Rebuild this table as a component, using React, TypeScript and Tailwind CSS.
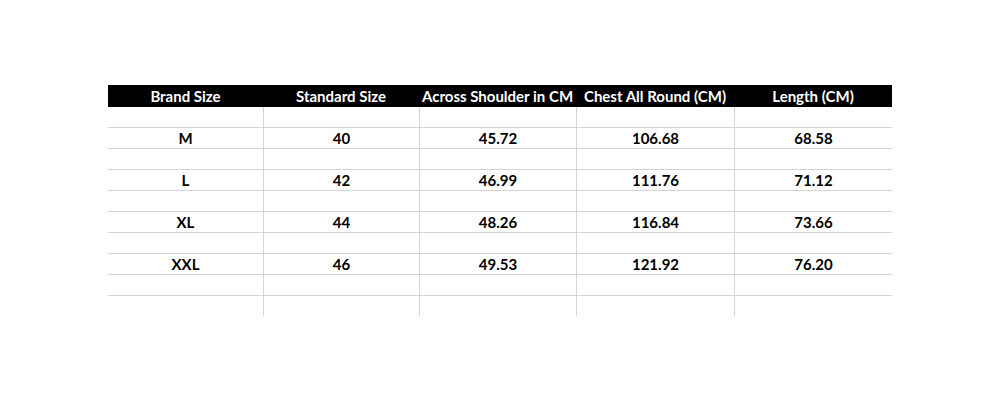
const COLS = ["w-[155px]", "w-[156px]", "w-[157px]", "w-[158px]", "w-[158px]"];

const HEADERS = ["Brand Size", "Standard Size", "Across Shoulder in CM", "Chest All Round (CM)", "Length (CM)"];

const SIZES: string[][] = [
  ["M", "40", "45.72", "106.68", "68.58"],
  ["L", "42", "46.99", "111.76", "71.12"],
  ["XL", "44", "48.26", "116.84", "73.66"],
  ["XXL", "46", "49.53", "121.92", "76.20"],
];

function Row({ cells, last = false }: { cells: string[]; last?: boolean }) {
  return (
    <div className={last ? "flex h-[20px]" : "flex h-[21px] border-b border-[#d4d4d4]"}>
      {COLS.map((w, i) => (
        <div
          key={i}
          className={`${w} flex items-center justify-center ${i > 0 ? "border-l border-[#d4d4d4]" : ""}`}
        >
          {cells[i]}
        </div>
      ))}
    </div>
  );
}

export default function App() {
  const rows: { cells: string[]; last?: boolean }[] = [];
  SIZES.forEach((s) => {
    rows.push({ cells: ["", "", "", "", ""] });
    rows.push({ cells: s });
  });
  rows.push({ cells: ["", "", "", "", ""] });
  rows.push({ cells: ["", "", "", "", ""], last: true });

  return (
    <div className="w-[1000px] h-[400px] bg-white pt-[85px] pl-[108px] font-['Lato',sans-serif] font-bold text-[15px] text-black">
      <div className="w-[784px]">
        <div className="flex h-[22px] bg-black text-white">
          {COLS.map((w, i) => (
            <div key={i} className={`${w} flex items-center justify-center whitespace-nowrap`}>
              {HEADERS[i]}
            </div>
          ))}
        </div>
        {rows.map((r, i) => (
          <Row key={i} cells={r.cells} last={r.last} />
        ))}
      </div>
    </div>
  );
}
